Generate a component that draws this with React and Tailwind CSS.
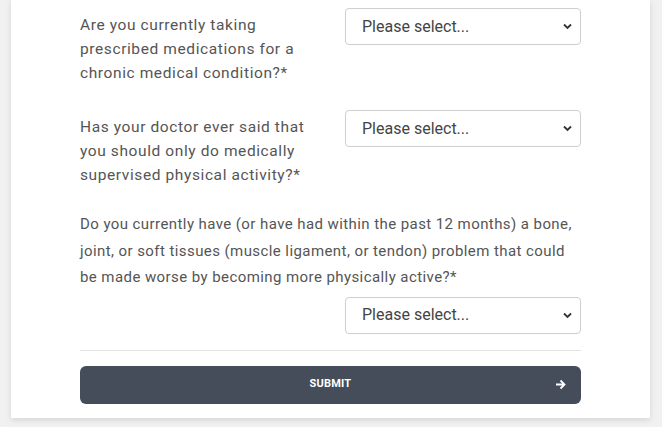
import React from "react";

function Select() {
  return (
    <div className="relative w-[236px] h-[37px] shrink-0">
      <select className="appearance-none w-full h-full border border-[#cfcfcf] rounded-[4px] bg-white pl-[16px] text-[16px] text-[#444] outline-none" style={{ fontFamily: "Roboto, sans-serif" }} defaultValue="">
        <option value="">Please select...</option>
      </select>
      <svg className="absolute right-[9px] top-[15px] pointer-events-none" width="9" height="7" viewBox="0 0 9 7">
        <path d="M1 1.5 L4.5 5 L8 1.5" fill="none" stroke="#333" strokeWidth="1.8" />
      </svg>
    </div>
  );
}

export default function App() {
  return (
    <div className="w-[662px] h-[427px] bg-[#f1f1f1] overflow-hidden" style={{ fontFamily: "Roboto, 'Noto Sans', sans-serif" }}>
      <div className="mx-[11px] w-[639px] h-[418px] bg-white shadow-[0_2px_6px_rgba(0,0,0,0.12)] px-[69px] pt-[8px]">
        <div className="flex justify-between">
          <div className="w-[245px] pt-[5px] text-[15.5px] leading-[24px] text-[#555] tracking-[0.6px]">
            Are you currently taking prescribed medications for a chronic medical condition?*
          </div>
          <Select />
        </div>
        <div className="flex justify-between mt-[25px]">
          <div className="w-[245px] pt-[5px] text-[15.5px] leading-[24px] text-[#555] tracking-[0.6px]">
            Has your doctor ever said that you should only do medically supervised physical activity?*
          </div>
          <Select />
        </div>
        <div className="mt-[24px] text-[15px] leading-[26.5px] text-[#555] tracking-[0.42px]">
          Do you currently have (or have had within the past 12 months) a bone, joint, or soft tissues (muscle ligament, or tendon) problem that could be made worse by becoming more physically active?*
        </div>
        <div className="flex justify-end mt-[6px]">
          <Select />
        </div>
        <div className="mt-[16px] border-t border-[#e3e3e3]" />
        <button className="mt-[15px] w-full h-[38px] bg-[#454d5b] rounded-[6px] flex items-center relative">
          <span className="w-full text-center text-white text-[11px] font-bold tracking-[0.2px]">SUBMIT</span>
          <svg className="absolute right-[15px] top-[13px]" width="11" height="11" viewBox="0 0 11 11">
            <path d="M1 5.5 H9.5 M5.5 1.5 L9.5 5.5 L5.5 9.5" fill="none" stroke="white" strokeWidth="1.8" />
          </svg>
        </button>
      </div>
    </div>
  );
}
